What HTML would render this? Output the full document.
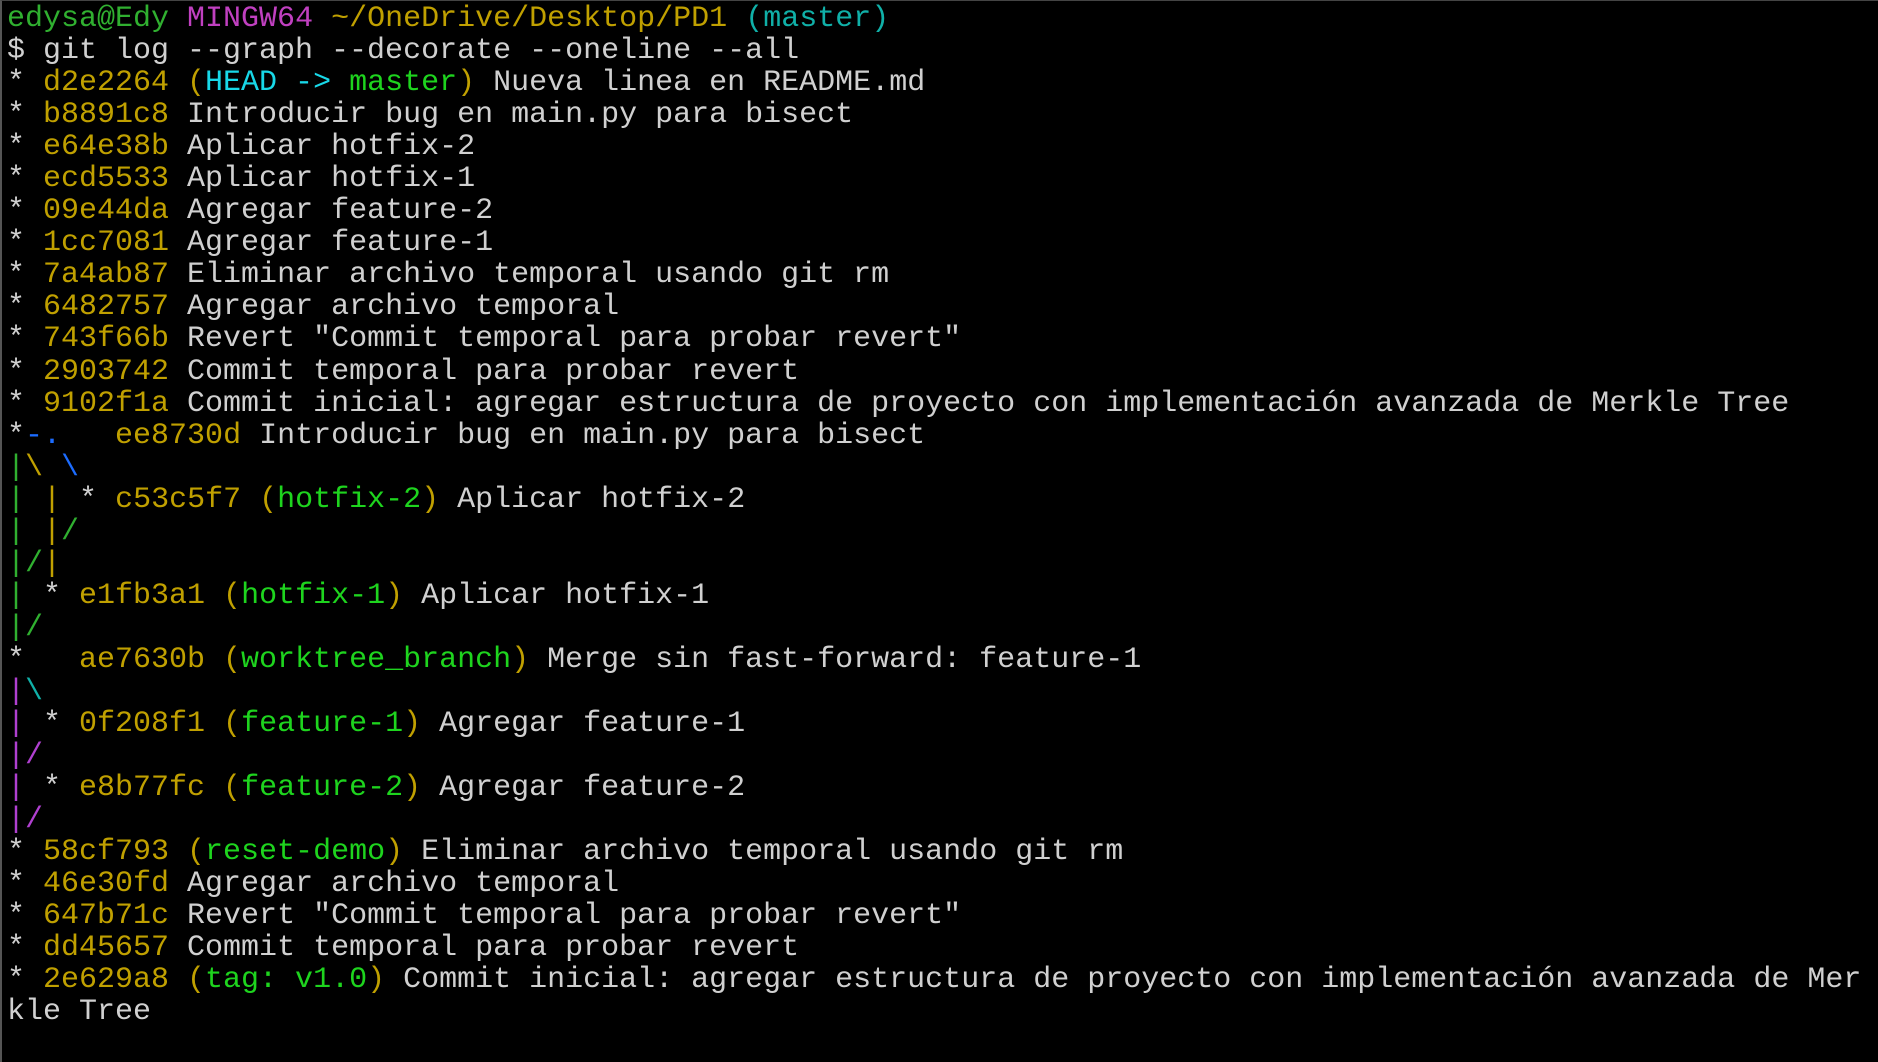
<!DOCTYPE html>
<html><head><meta charset="utf-8"><style>
html,body{margin:0;padding:0;background:#000;width:1878px;height:1062px;overflow:hidden}
body{border-left:2px solid #555;border-top:1px solid #444;box-sizing:border-box;position:relative}
pre{margin:0;position:absolute;left:5px;top:2px;font-family:"Liberation Mono",monospace;font-size:30px;line-height:32.05px;color:#d0d0d0;white-space:pre}
.y{color:#c0a000}.g{color:#1ed41e}.c{color:#18d8e8}.m{color:#c040c0}.u{color:#30b030}.b{color:#1c6cff}.mg{color:#b040d0}.t{color:#10b0a8}
</style></head><body><pre><span class="u">edysa@Edy</span> <span class="m">MINGW64</span> <span class="y">~/OneDrive/Desktop/PD1</span> <span class="t">(master)</span>
$ git log --graph --decorate --oneline --all
* <span class="y">d2e2264 (</span><span class="c">HEAD -&gt; </span><span class="g">master</span><span class="y">)</span> Nueva linea en README.md
* <span class="y">b8891c8</span> Introducir bug en main.py para bisect
* <span class="y">e64e38b</span> Aplicar hotfix-2
* <span class="y">ecd5533</span> Aplicar hotfix-1
* <span class="y">09e44da</span> Agregar feature-2
* <span class="y">1cc7081</span> Agregar feature-1
* <span class="y">7a4ab87</span> Eliminar archivo temporal usando git rm
* <span class="y">6482757</span> Agregar archivo temporal
* <span class="y">743f66b</span> Revert "Commit temporal para probar revert"
* <span class="y">2903742</span> Commit temporal para probar revert
* <span class="y">9102f1a</span> Commit inicial: agregar estructura de proyecto con implementación avanzada de Merkle Tree
*<span class="b">-.</span>   <span class="y">ee8730d</span> Introducir bug en main.py para bisect
<span class="u">|</span><span class="y">\</span> <span class="b">\</span>
<span class="u">|</span> <span class="y">|</span> * <span class="y">c53c5f7 (</span><span class="g">hotfix-2</span><span class="y">)</span> Aplicar hotfix-2
<span class="u">|</span> <span class="y">|</span><span class="u">/</span>
<span class="u">|/</span><span class="y">|</span>
<span class="u">|</span> * <span class="y">e1fb3a1 (</span><span class="g">hotfix-1</span><span class="y">)</span> Aplicar hotfix-1
<span class="u">|/</span>
*   <span class="y">ae7630b (</span><span class="g">worktree_branch</span><span class="y">)</span> Merge sin fast-forward: feature-1
<span class="mg">|</span><span class="t">\</span>
<span class="mg">|</span> * <span class="y">0f208f1 (</span><span class="g">feature-1</span><span class="y">)</span> Agregar feature-1
<span class="mg">|/</span>
<span class="mg">|</span> * <span class="y">e8b77fc (</span><span class="g">feature-2</span><span class="y">)</span> Agregar feature-2
<span class="mg">|/</span>
* <span class="y">58cf793 (</span><span class="g">reset-demo</span><span class="y">)</span> Eliminar archivo temporal usando git rm
* <span class="y">46e30fd</span> Agregar archivo temporal
* <span class="y">647b71c</span> Revert "Commit temporal para probar revert"
* <span class="y">dd45657</span> Commit temporal para probar revert
* <span class="y">2e629a8 (</span><span class="g">tag: v1.0</span><span class="y">)</span> Commit inicial: agregar estructura de proyecto con implementación avanzada de Mer
kle Tree
</pre></body></html>
